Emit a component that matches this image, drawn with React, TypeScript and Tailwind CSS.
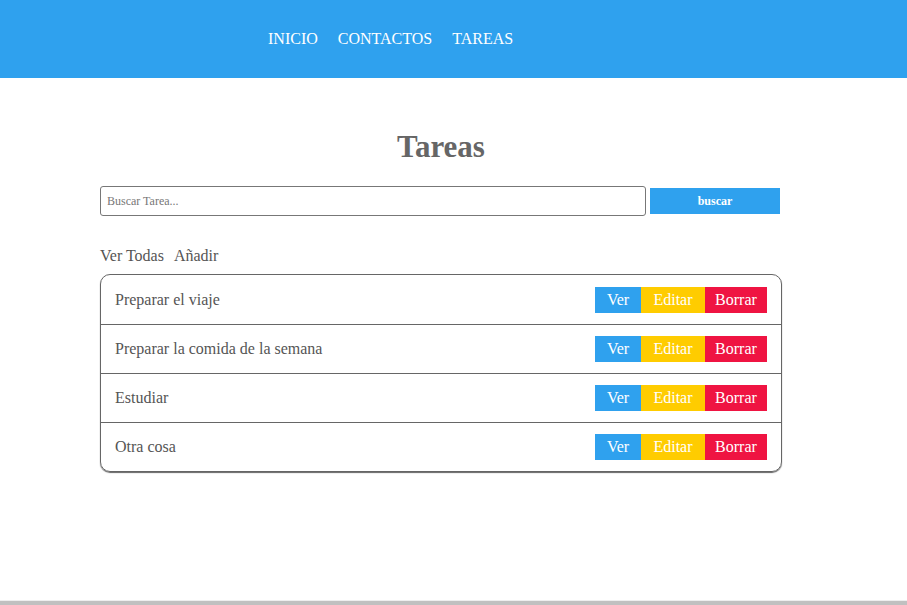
const tareas = ['Preparar el viaje', 'Preparar la comida de la semana', 'Estudiar', 'Otra cosa']

export default function App() {
  return (
    <div className="min-h-[605px] flex flex-col bg-white text-[#555] font-['Liberation_Serif',serif]">
      <header className="h-[78px] bg-[#2fa1ee] flex items-center pl-[268px] gap-5 text-white text-[16px]">
        <a href="#">INICIO</a>
        <a href="#">CONTACTOS</a>
        <a href="#">TAREAS</a>
      </header>

      <main className="flex-1 ml-[100px] w-[682px]">
        <h1 className="mt-[50px] text-center text-[31px] leading-[38px] font-bold text-[#666]">Tareas</h1>

        <div className="mt-[20px] flex items-center gap-1">
          <input
            type="text"
            placeholder="Buscar Tarea..."
            className="w-[546px] h-[30px] border border-[#777] rounded-[3px] px-[6px] text-[12px] placeholder:text-[#777] outline-none"
          />
          <button className="w-[130px] h-[26px] bg-[#2fa1ee] text-white text-[12px] font-bold">buscar</button>
        </div>

        <div className="mt-[30px] flex gap-[10px] text-[16px] leading-5">
          <a href="#">Ver Todas</a>
          <a href="#">Añadir</a>
        </div>

        <ul className="mt-[8px] border border-[#666] rounded-[10px] shadow-[0_1px_1px_#666]">
          {tareas.map((t, i) => (
            <li
              key={t}
              className={`h-[49px] flex items-center justify-between pl-[14px] pr-[14px] text-[16px] ${i > 0 ? 'border-t border-[#666]' : ''}`}
            >
              <span>{t}</span>
              <div className="flex h-[26px] text-white text-[16px]">
                <button className="w-[46px] bg-[#2fa1ee]">Ver</button>
                <button className="w-[64px] bg-[#ffcc00]">Editar</button>
                <button className="w-[62px] bg-[#ef1442]">Borrar</button>
              </div>
            </li>
          ))}
        </ul>
      </main>

      <div className="h-px bg-[#eeeeee]" />
      <div className="h-[4px] bg-[#c0c0c0]" />
    </div>
  )
}
